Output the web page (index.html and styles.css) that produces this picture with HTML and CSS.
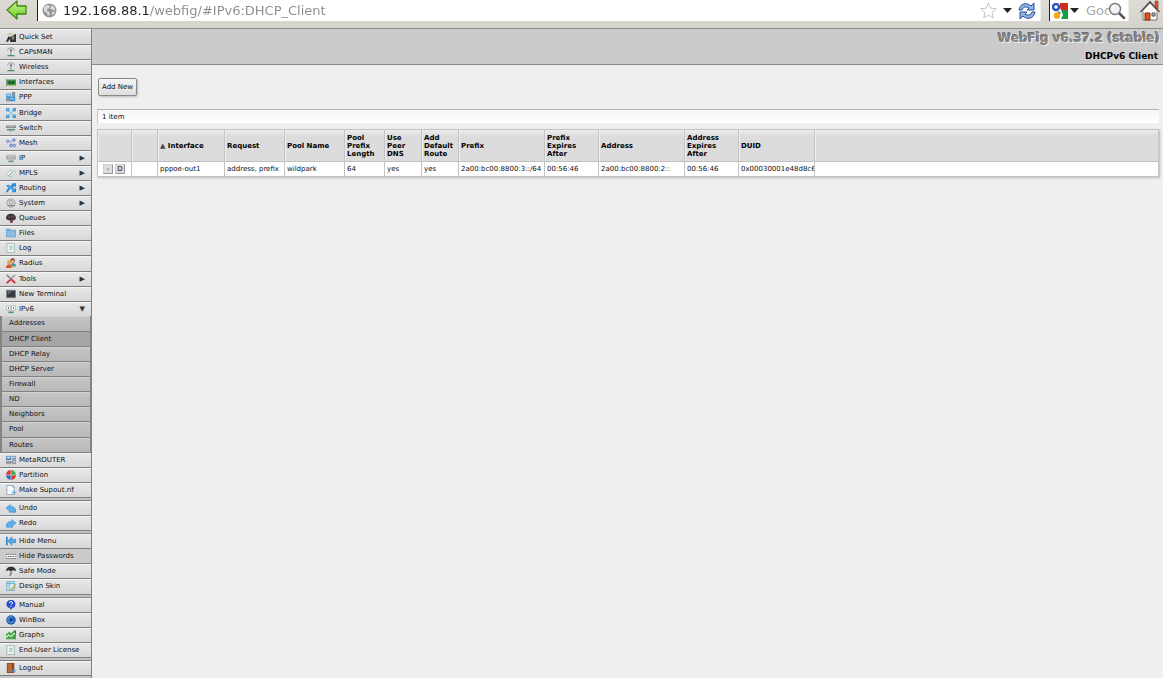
FILE: index.html
```
<!DOCTYPE html>
<html lang="en">
<head>
  <meta charset="UTF-8" />
  <meta name="viewport" content="width=device-width, initial-scale=1" />
  <title>WebFig</title>
  <link rel="stylesheet" href="styles.css">
</head>
<body>

  <form class="toolbar">
    <button type="button" class="tool-btn back" aria-label="Back">
      <svg width="22" height="22" viewBox="0 0 22 22"><defs><linearGradient id="gb" x1="0" y1="0" x2="0" y2="1"><stop offset="0" stop-color="#d4f59a"/><stop offset="1" stop-color="#62c81c"/></linearGradient></defs><path d="M1 10L11 1v5h9v8h-9v5z" fill="url(#gb)" stroke="#3c8a10" stroke-width="1.3" stroke-linejoin="round"/></svg>
    </button>
    <div class="field url-field">
      <svg width="15" height="15" viewBox="0 0 15 15"><circle cx="7.5" cy="7.5" r="7" fill="#989898"/><path d="M2 4l3-2 3 1-1 2-2 1v2l2 1 1 2-2 2-1-3-3-2zM10 2l3 3-1 3-2-2-2 0 1-2zM10 9l3 0-2 3-1-1z" fill="#dcdcdc"/></svg>
      <input class="url" type="text" value="192.168.88.1/webfig/#IPv6:DHCP_Client" aria-label="Address" />
      <svg width="17" height="17" viewBox="0 0 17 17"><path d="M8.5 1l2.2 5.2 5.6.5-4.2 3.8 1.2 5.5-4.8-2.9L3.7 16l1.2-5.500L.7 6.700l5.600-.5z" fill="#fff" stroke="#c4c4c4"/></svg>
      <svg class="caret" width="9" height="5" viewBox="0 0 9 5"><path d="M0 0h9L4.500 5z" fill="#222"/></svg>
      <button type="button" class="tool-btn" aria-label="Reload">
        <svg width="18" height="18" viewBox="0 0 18 18"><g fill="#8fb4e6" stroke="#2b4f94" stroke-linejoin="round"><path d="M1 8C2 1 9 0 13 4l3-3v7H9l2-2C8 4 5 5 4 8z"/><path d="M17 10c-1 7-8 8-12 4l-3 3v-7h7l-2 2c3 2 6 1 7-2z"/></g></svg>
      </button>
    </div>
    <div class="field search-field">
      <svg width="16" height="16" viewBox="0 0 16 16"><path fill="#fff" d="M0 0h16v16H0z"/><path fill="#d5281f" d="M8 0h8v7H9l-1-3z"/><path fill="#169b47" d="M9 7h7v9H9l2-4z"/><circle cx="4" cy="4" r="3" fill="none" stroke="#2a56c6" stroke-width="2.500"/><path d="M5 8l3 1 1 2-2-1z" fill="#2a56c6"/><circle cx="5" cy="12.500" r="3.200" fill="#f4a90f"/></svg>
      <svg class="caret" width="9" height="5" viewBox="0 0 9 5"><path d="M0 0h9L4.500 5z" fill="#222"/></svg>
      <input class="search" type="text" placeholder="Google" aria-label="Search" />
      <button type="button" class="tool-btn go" aria-label="Go">
        <svg width="18" height="18" viewBox="0 0 18 18"><path d="M11 11l5 5" stroke="#555" stroke-width="2.500" stroke-linecap="round"/><circle cx="7" cy="7" r="5.500" fill="#eef2f5" stroke="#777" stroke-width="1.400"/><path d="M4 7a3 3 0 0 1 3-3" fill="none" stroke="#fff" stroke-width="1.500"/></svg>
      </button>
    </div>
    <button type="button" class="tool-btn home" aria-label="Home">
      <svg width="22" height="22" viewBox="0 0 22 22"><path d="M16 1h3v8h-3z" fill="#d9532f" stroke="#7c4a35" stroke-width=".6"/><path d="M4 11l7-8 7 8v9H4z" fill="#fbfaf8" stroke="#777"/><path d="M1.500 12L11 2l9.500 10" fill="none" stroke="#5e4a42" stroke-width="1.600"/><path d="M3 12.500L11 4l8 8.500" fill="none" stroke="#fff" stroke-width=".8"/><path d="M6 13h5v7H6z" fill="#e0501c" stroke="#8a3110"/><path d="M13 13h3v3h-3z" fill="#9db8d4" stroke="#555"/></svg>
    </button>
  </form>

  <div class="page">
    <nav class="sidebar">
      <ul class="menu main-menu">
        <li><a href="#Quick_Set"><svg viewBox="0 0 12 12"><path d="M0 11l3-6 2 1 7-4v10H5V8l-3 4z" fill="#333"/><path d="M7 5h3v4H7z" fill="#888"/><path d="M4 1l2 2 2-2M2 3l3-1" stroke="#c7b24a" fill="none"/></svg>Quick Set</a></li>
        <li><a href="#CAPsMAN"><svg viewBox="0 0 12 12"><path d="M2 4C2 0 10 0 10 4M6 3v7" fill="none" stroke="#7a8a84"/><path d="M1 11c0-2 10-2 10 0z" fill="#448a5b"/><circle cx="6" cy="4" r="1.200" fill="#667"/></svg>CAPsMAN</a></li>
        <li><a href="#Wireless"><svg viewBox="0 0 12 12"><path d="M2 4C2 0 10 0 10 4M6 3v7" fill="none" stroke="#7a8a84"/><path d="M1 11c0-2 10-2 10 0z" fill="#448a5b"/><circle cx="6" cy="4" r="1.200" fill="#667"/></svg>Wireless</a></li>
        <li><a href="#Interfaces"><svg viewBox="0 0 12 12"><path d="M0 2h1v9H0z" fill="#888"/><path d="M1 3h11v7H1z" fill="#3b9b43"/><path d="M3 5h3v3H3zM7 5h3v3H7z" fill="#1d4a24"/><path d="M3 10h7v1H3z" fill="#c9b44c"/></svg>Interfaces</a></li>
        <li><a href="#PPP"><svg viewBox="0 0 12 12"><path d="M7 0h4v7H7zM0 6h4v5H0z" fill="#8394a3"/><path d="M0 2h6v5H0z" fill="#4f9fd8"/><path d="M1 3h4v2H1z" fill="#a5d6f5"/><path d="M4 6h7v5H4z" fill="#3584c8"/><path d="M5 7h5v2H5z" fill="#8cc8f0"/></svg>PPP</a></li>
        <li><a href="#Bridge"><svg viewBox="0 0 12 12"><path d="M2 2l8 8M10 2l-8 8" stroke="#8cc8f0" stroke-width="1.500"/><path d="M0 0h4v4H0zM8 0h4v4H8zM0 8h4v4H0zM8 8h4v4H8z" fill="#3b93da"/><path d="M1 1h2v1H1zM9 1h2v1H9zM1 9h2v1H1zM9 9h2v1H9z" fill="#a9d9f8"/></svg>Bridge</a></li>
        <li><a href="#Switch"><svg viewBox="0 0 12 12"><path d="M0 3h12v3H0z" fill="#7b8582"/><path d="M1 4h10v1H1z" fill="#c5cfcc"/><path d="M1 7h10v2H1z" fill="#689478"/><path d="M4 9h4v1H4z" fill="#888"/></svg>Switch</a></li>
        <li><a href="#Mesh"><svg viewBox="0 0 12 12"><path d="M2 4h4v5h4M6 4l3-2" fill="none" stroke="#96a5ce"/><g fill="#c8d5f5" stroke="#4a68ba"><circle cx="2" cy="4" r="1.300"/><circle cx="9.500" cy="2.500" r="1.500"/><circle cx="6" cy="9" r="1.500"/><circle cx="10" cy="9" r="1.500"/></g></svg>Mesh</a></li>
        <li><a href="#IP"><svg viewBox="0 0 12 12"><path d="M0 2h12v6H0z" fill="#aeb4b1"/><path d="M1 3h2v3H1zM5 3h2v3H5zM9 3h2v3H9z" fill="#f1f1f1"/><path d="M2 4v2M6 4v2M10 4v2" stroke="#58605c"/><path d="M3 9h6v2H3z" fill="#6e9a7b"/></svg>IP<span class="arrow">▶</span></a></li>
        <li><a href="#MPLS"><svg viewBox="0 0 12 12"><path d="M0 8l6-6 2 2-6 6zM4 10l6-7 2 2-6 6z" fill="#f1f8f7" stroke="#86a19e" stroke-width=".8"/></svg>MPLS<span class="arrow">▶</span></a></li>
        <li><a href="#Routing"><svg viewBox="0 0 12 12"><path d="M0 3l3-1 3 2 1-2-1-1 6-1v5l-2-1-2 2 2 1 2-1v5l-5 0 1-2-3-2-3 4H0l1-3 2-2z" fill="#2c8bdc"/><path d="M3 4l4 3 3 2" fill="none" stroke="#89c7f3"/></svg>Routing<span class="arrow">▶</span></a></li>
        <li><a href="#System"><svg viewBox="0 0 12 12"><circle cx="6" cy="6" r="5" fill="#d3d3d3" stroke="#7d7d7d" stroke-dasharray="2 .8"/><circle cx="6" cy="5" r="2" fill="#eee" stroke="#888"/><path d="M2 9h8" stroke="#666"/></svg>System<span class="arrow">▶</span></a></li>
        <li><a href="#Queues"><svg viewBox="0 0 12 12"><path d="M0 6c0-7 12-7 12 0 0 2-2 3-4 3v2H5V9C2 9 0 8 0 6z" fill="#43353a"/><path d="M5 9h3v3H5z" fill="#a33e49"/><path d="M3 4h2v2H3zM7 3h2v2H7z" fill="#6a5960"/></svg>Queues</a></li>
        <li><a href="#Files"><svg viewBox="0 0 12 12"><path d="M0 1h5l1 1h6v9H0z" fill="#6fa4cf"/><path d="M1 3h10v7H1z" fill="#8fbbe0"/></svg>Files</a></li>
        <li><a href="#Log"><svg viewBox="0 0 12 12"><path d="M1 .5h9v11H1z" fill="#eef6f4" stroke="#9bb0ac"/><path d="M4 4h4M4 6h4M4 8h3" stroke="#7fb0a5"/></svg>Log</a></li>
        <li><a href="#Radius"><svg viewBox="0 0 12 12"><circle cx="8" cy="3" r="2.800" fill="#8c4a28"/><circle cx="8" cy="4" r="1.600" fill="#efb98c"/><path d="M5 10c0-5 7-5 7 0z" fill="#2f78c4"/><circle cx="3.500" cy="5" r="2.300" fill="#e5a243"/><path d="M0 12c0-6 7-6 7 0z" fill="#d9532f"/><path d="M6 8h4v3H6z" fill="#7db64b"/></svg>Radius</a></li>
        <li><a href="#Tools"><svg viewBox="0 0 12 12"><path d="M11 1L5 7" stroke="#999" stroke-width="1.600"/><path d="M1 1l5 5" stroke="#7d8b88" stroke-width="2"/><path d="M6 6l5 5M1 11l4-4" stroke="#d13440" stroke-width="2.400"/></svg>Tools<span class="arrow">▶</span></a></li>
        <li><a href="#New_Terminal"><svg viewBox="0 0 12 12"><path d="M.5 1.500h11v9H.5z" fill="#373c44" stroke="#81868c"/><path d="M2 3h5L2 7z" fill="#6d747e"/></svg>New Terminal</a></li>
        <li><a class="open" href="#IPv6"><svg viewBox="0 0 12 12"><path d="M0 2h12v6H0z" fill="#b7bcba"/><path d="M1 3h4v4H1zM7 3h4v4H7z" fill="#fafafa"/><path d="M3 4v2M9 4v2" stroke="#444"/><path d="M3 9h6v2H3z" fill="#4b9360"/></svg>IPv6<span class="arrow">▼</span></a></li>
        <li class="sub">
          <ul class="submenu">
            <li><a href="#IPv6:Addresses">Addresses</a></li>
            <li><a class="active" href="#IPv6:DHCP_Client">DHCP Client</a></li>
            <li><a href="#IPv6:DHCP_Relay">DHCP Relay</a></li>
            <li><a href="#IPv6:DHCP_Server">DHCP Server</a></li>
            <li><a href="#IPv6:Firewall">Firewall</a></li>
            <li><a href="#IPv6:ND">ND</a></li>
            <li><a href="#IPv6:Neighbors">Neighbors</a></li>
            <li><a href="#IPv6:Pool">Pool</a></li>
            <li><a href="#IPv6:Routes">Routes</a></li>
          </ul>
        </li>
        <li><a href="#MetaROUTER"><svg viewBox="0 0 12 12"><path d="M0 1h6v5H0z" fill="#527fb4"/><path d="M1 2h4v2H1z" fill="#d8e8f5"/><path d="M7 1h5v10H7z" fill="#8ba1b8"/><path d="M8 3h3M8 8h3" stroke="#dfe9f2"/><path d="M0 7h6v4H0z" fill="#8fa0ae"/><path d="M5 8h3v1H5z" fill="#c44"/></svg>MetaROUTER</a></li>
        <li><a href="#Partition"><svg viewBox="0 0 12 12"><path d="M6 6V0a6 6 0 0 0-6 6z" fill="#dc3630"/><path d="M6 6v6A6 6 0 0 1 0 6z" fill="#2f6fc0"/><path d="M6 6V0a6 6 0 0 1 6 6z" fill="#3ca74a"/><path d="M6 6h6A6 6 0 0 1 6 12z" fill="#dc3630"/><path d="M6 0v12M0 6h12" fill="none" stroke="#eee" stroke-width=".7"/></svg>Partition</a></li>
        <li><a href="#Make_Supout"><svg viewBox="0 0 12 12"><path d="M1 .5h7l2 2v9H1z" fill="#f8fbfd" stroke="#7f9db4"/><path d="M8 .5v2h2" fill="none" stroke="#7f9db4"/><path d="M7 8h2V6l3 3-3 3v-2H7z" fill="#69b0d6"/></svg>Make Supout.rif</a></li>
      </ul>
      <ul class="menu pair">
        <li><a href="#Undo"><svg viewBox="0 0 12 12"><path d="M0 6l5-4v2c4 0 7 2 7 7H4V9z" fill="#5fb0ea" stroke="#2876b8" stroke-width=".6"/></svg>Undo</a></li>
        <li><a href="#Redo"><svg viewBox="0 0 12 12"><path d="M12 6L7 2v2C3 4 0 6 0 11h8V9z" fill="#5fb0ea" stroke="#2876b8" stroke-width=".6"/></svg>Redo</a></li>
      </ul>
      <ul class="menu quad">
        <li><a href="#Hide_Menu"><svg viewBox="0 0 12 12"><path d="M0 1h2v10H0z" fill="#2f86cc"/><path d="M2 6l5-5v3h5v4H7v3z" fill="#52aae6" stroke="#2876b8" stroke-width=".6"/></svg>Hide Menu</a></li>
        <li><a class="pressed" href="#Hide_Passwords"><svg viewBox="0 0 12 12"><path d="M0 4h12v5H0z" fill="#fff" stroke="#7c7c7c"/><path d="M2 6h2v1H2zM5 6h2v1H5zM8 6h2v1H8z" fill="#222"/></svg>Hide Passwords</a></li>
        <li><a href="#Safe_Mode"><svg viewBox="0 0 12 12"><path d="M0 6C0-1 12-1 12 6L9 5 6 6 3 5z" fill="#333"/><path d="M6 4v6q0 1.500-2 1" fill="none" stroke="#333"/></svg>Safe Mode</a></li>
        <li><a href="#Design_Skin"><svg viewBox="0 0 12 12"><path d="M1 .5h9v11H1z" fill="#d4ecf8" stroke="#5ca5cd"/><path d="M1 3h9M4 1v10" stroke="#5ca5cd"/><path d="M11 4l-5 6-1 2 2-1 5-6z" fill="#efc14e" stroke="#b88320" stroke-width=".5"/></svg>Design Skin</a></li>
      </ul>
      <ul class="menu quad">
        <li><a href="#Manual"><svg viewBox="0 0 12 12"><path d="M6 0a5 5 0 0 1 2 9.700L5 12V10A5 5 0 0 1 6 0z" fill="#2c4bc8"/><path d="M4 3.500c0-2 4-2 4 0 0 1.500-2 1.300-2 3M6 7.500v1" fill="none" stroke="#fff" stroke-width="1.200"/></svg>Manual</a></li>
        <li><a href="#WinBox"><svg viewBox="0 0 12 12"><circle cx="6" cy="6" r="5.700" fill="#1f5fae"/><path d="M8 3a3.500 3.500 0 1 0 1 4" fill="none" stroke="#5b9bd6" stroke-width="1.300"/><circle cx="6" cy="6" r="1.300" fill="#123a75"/></svg>WinBox</a></li>
        <li><a href="#Graphs"><svg viewBox="0 0 12 12"><path d="M0 5l4-3 2 2 6-4v11H0z" fill="#46a545"/><path d="M0 9l3-3 3 2 5-5" fill="none" stroke="#dff2d5" stroke-width="1.300"/><path d="M8 1h4v4z" fill="#23862a"/></svg>Graphs</a></li>
        <li><a href="#License"><svg viewBox="0 0 12 12"><path d="M1 .5h9v11H1z" fill="#eef6f4" stroke="#9bb0ac"/><path d="M4 4h4M4 6h4M4 8h3" stroke="#7fb0a5"/></svg>End-User License</a></li>
      </ul>
      <ul class="menu single">
        <li><a href="#Logout"><svg viewBox="0 0 12 12"><path d="M1 0h9v12H1z" fill="#8c4a22"/><path d="M2 1h5v10H2z" fill="#b9693a"/><path d="M6 9h3V7l3 2.500L9 12v-2H6z" fill="#4ba3e2"/></svg>Logout</a></li>
      </ul>
    </nav>

    <main class="content">
      <header class="header">
        <div class="version">WebFig v6.37.2 (stable)</div>
        <h1>DHCPv6 Client</h1>
      </header>
      <div class="body">
        <button type="button" class="add-btn">Add New</button>
        <div class="count">1 item</div>
        <table class="items">
          <colgroup>
            <col class="c-ctl"><col class="c-flag"><col class="c-iface"><col class="c-text"><col class="c-text">
            <col class="c-len"><col class="c-yes"><col class="c-yes"><col class="c-addr"><col class="c-time">
            <col class="c-addr"><col class="c-time"><col class="c-duid"><col>
          </colgroup>
          <thead>
            <tr>
              <th></th><th></th><th><span class="sort">▲</span> Interface</th><th>Request</th><th>Pool Name</th>
              <th>Pool Prefix Length</th><th>Use Peer DNS</th><th>Add Default Route</th><th>Prefix</th><th>Prefix Expires After</th>
              <th>Address</th><th>Address Expires After</th><th>DUID</th><th></th>
            </tr>
          </thead>
          <tbody>
            <tr>
              <td class="ctl"><button type="button">-</button><button type="button">D</button></td><td></td><td>pppoe-out1</td><td>address, prefix</td><td>wildpark</td>
              <td>64</td><td>yes</td><td>yes</td><td>2a00:bc00:8800:3::/64</td><td>00:56:46</td>
              <td>2a00:bc00:8800:2::</td><td>00:56:46</td><td>0x00030001e48d8c6</td><td></td>
            </tr>
          </tbody>
        </table>
      </div>
    </main>
  </div>

</body>
</html>
```
FILE: styles.css
```
* {
  box-sizing: border-box;
}

body {
  margin: 0;
  display: flex;
  flex-direction: column;
  min-height: 100vh;
  font-family: 'DejaVu Sans', sans-serif;
  font-size: 7px;
  color: #111;
  background: #efefef;
}

ul {
  margin: 0;
  padding: 0;
  list-style: none;
}

button, input {
  font-family: inherit;
}

/* browser bar */
.toolbar {
  display: flex;
  align-items: flex-start;
  gap: 8px;
  height: 29px;
  padding: 0 2px 0 6px;
  background: linear-gradient(#dedad6, #d6d2ce);
  border-bottom: 1px solid #8c8c8c;
}

.tool-btn {
  display: flex;
  padding: 0;
  border: 0;
  background: none;
}

.back {
  width: 23px;
}

.field {
  display: flex;
  align-items: center;
  gap: 6px;
  height: 21px;
  padding: 0 4px;
  background: #fff;
  border-left: 1px solid #222;
  border-right: 1px solid #eee;
}

.field svg {
  flex: none;
}

.field input {
  min-width: 0;
  padding: 0;
  border: 0;
  outline: 0;
  background: none;
}

.url-field {
  flex: 1;
}

.field .url {
  flex: 1;
  font-size: 13px;
  color: transparent;
  background: linear-gradient(to right, #222 86px, #8c8c8c 86px);
  -webkit-background-clip: text;
  background-clip: text;
}

.search-field {
  width: 80px;
  gap: 2px;
  padding: 0 2px;
}

.field .search {
  flex: 1;
  margin-left: 5px;
  font-size: 13px;
}

.search::placeholder {
  color: #aaa;
}

.go {
  margin-left: -3px;
}

.home {
  margin-left: 2px;
}

.page {
  flex: 1;
  display: flex;
}

/* side menu */
.sidebar {
  display: flex;
  flex-direction: column;
  gap: 2px;
  width: 92px;
  padding-bottom: 2px;
  background: #c4c4c4;
  border-right: 1px solid #808080;
}

.menu, .menu li, .submenu {
  display: flex;
  flex-direction: column;
}

.menu {
  flex: 1 0 auto;
  border-bottom: 1px solid #808080;
}

.menu li, .submenu li {
  flex: 1 0 15px;
}

.main-menu {
  flex-grow: 31;
}

.main-menu li:first-child a {
  border-top: 0;
}

.pair {
  flex-grow: 2;
}

.quad {
  flex-grow: 4;
}

.menu .sub {
  flex: 9 0 135px;
}

.menu a {
  flex: 1;
  display: flex;
  align-items: center;
  gap: 3px;
  padding: 0 6px;
  color: #111;
  text-decoration: none;
  white-space: nowrap;
  background: linear-gradient(#e8e8e8, #d8d8d8);
  border-top: 1px solid #808080;
  box-shadow: inset 0 1px #f4f4f4;
}

.menu a:hover {
  background: #e8e8e8;
}

.menu svg {
  flex: none;
  width: 10px;
  height: 10px;
}

.menu .pressed {
  background: #cacaca;
  box-shadow: none;
}

.arrow {
  margin-left: auto;
  font-size: 7px;
  color: #333;
}

.submenu {
  flex: 1;
  padding: 0 1px 0 2px;
  background: #858585;
}

.submenu a {
  padding: 0 7px;
  background: linear-gradient(#c6c6c6, #b8b8b8);
  box-shadow: inset 0 1px #d0d0d0;
}

.submenu .active {
  background: #a6a6a6;
  box-shadow: none;
}

/* content */
.content {
  flex: 1;
  min-width: 0;
}

.header {
  height: 36px;
  padding: 1px 3px 0 0;
  text-align: right;
  background: #cbcbcb;
  border-bottom: 1px solid #8c8c8c;
}

.version {
  font-size: 12px;
  font-weight: bold;
  line-height: 17px;
  color: #858585;
  text-shadow: 1px 1px #eee, -1px -1px #6c6c6c;
}

.header h1 {
  margin: 2px 2px 0 0;
  font-size: 9px;
  line-height: 14px;
  color: #000;
}

.body {
  padding: 13px 4px 0 5px;
}

.add-btn {
  display: block;
  height: 18px;
  margin-left: 1px;
  padding: 0 3px;
  font-size: 7px;
  color: #111;
  background: linear-gradient(#f4f4f4, #dedede);
  border: 1px solid #888;
  border-radius: 2px;
  box-shadow: 1px 1px 2px #bbb;
}

.count {
  height: 14px;
  margin: 13px 0 6px;
  padding-left: 4px;
  line-height: 14px;
  background: linear-gradient(#f6f6f6, #fff);
  border-top: 1px solid #b4b4b4;
  border-left: 1px solid #ccc;
}

.items {
  width: 100%;
  table-layout: fixed;
  border-collapse: separate;
  border-spacing: 0;
  background: #fff;
  border: 1px solid #c4c4c4;
  box-shadow: 1px 1px 2px #bbb;
}

.c-ctl { width: 34px; }
.c-flag { width: 26px; }
.c-iface { width: 67px; }
.c-text { width: 60px; }
.c-len { width: 40px; }
.c-yes { width: 37px; }
.c-addr { width: 86px; }
.c-time { width: 54px; }
.c-duid { width: 76px; }

.items th, .items td {
  padding: 0 0 0 2px;
  text-align: left;
  border-right: 1px solid #c4c4c4;
  overflow: hidden;
}

.items th:last-child, .items td:last-child {
  border-right: 0;
}

.items th {
  height: 32px;
  line-height: 8px;
  color: #000;
  background: linear-gradient(#ececec, #dcdcdc 6px);
  border-bottom: 1px solid #c0c0c0;
  box-shadow: inset 1px 0 #eee;
}

.sort {
  font-size: 7px;
  color: #444;
}

.items td {
  height: 14px;
  line-height: 9px;
  white-space: nowrap;
}

.items .ctl {
  padding-left: 5px;
}

.ctl button {
  width: 10px;
  height: 10px;
  margin-right: 2px;
  padding: 0;
  font-size: 7px;
  line-height: 8px;
  color: #111;
  background: #ddd;
  border: 1px solid #999;
  border-top-color: #ccc;
  border-left-color: #ccc;
}
```
